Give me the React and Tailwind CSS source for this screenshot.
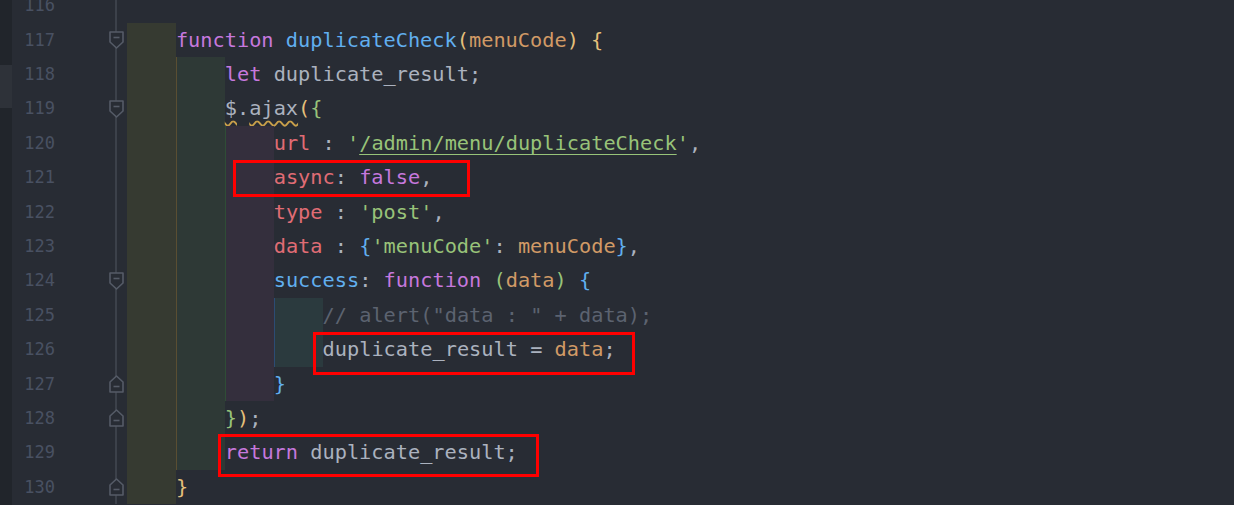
import React from 'react';

const C = {
  kw: 'text-[#c678dd]',
  fn: 'text-[#61afef]',
  prop: 'text-[#e06c75]',
  str: 'text-[#98c379]',
  param: 'text-[#d19a66]',
  plain: 'text-[#abb2bf]',
  cmt: 'text-[#5c6370]',
  gold: 'text-[#e5c07b]',
  green: 'text-[#98c379]',
  blue: 'text-[#61afef]',
};

const wavy = ' underline decoration-wavy decoration-[#c9a04a] underline-offset-[5px] decoration-[1.5px]';

// indent rainbow bands, one per level
const bands = [
  'bg-[#363a31]',
  'bg-[#2e3936] border-l border-[#5a4e32]',
  'bg-[#342f3d] border-l border-[#2f4d36]',
  'bg-[#2b3a3e] border-l border-[#2c4c74]',
];

const lines = [
  { n: 116, lv: 0, code: [] },
  {
    n: 117, lv: 1, fold: 'open',
    code: [
      ['function', C.kw], [' '], ['duplicateCheck', C.fn], ['(', C.gold],
      ['menuCode', C.param], [')', C.gold], [' '], ['{', C.gold],
    ],
  },
  { n: 118, lv: 2, code: [['let', C.kw], [' duplicate_result;', C.plain]] },
  {
    n: 119, lv: 2, fold: 'open',
    code: [
      ['$', C.plain + wavy],
      ['.', C.plain],
      ['ajax', C.plain + wavy],
      ['(', C.gold], ['{', C.green],
    ],
  },
  {
    n: 120, lv: 3,
    code: [
      ['url', C.prop], [' : ', C.plain], ["'", C.str],
      ['/admin/menu/duplicateCheck', C.str + ' underline underline-offset-[4px] decoration-1'],
      ["'", C.str], [',', C.plain],
    ],
  },
  { n: 121, lv: 3, code: [['async', C.prop], [': ', C.plain], ['false', C.kw], [',', C.plain]] },
  { n: 122, lv: 3, code: [['type', C.prop], [' : ', C.plain], ["'post'", C.str], [',', C.plain]] },
  {
    n: 123, lv: 3,
    code: [
      ['data', C.prop], [' : ', C.plain], ['{', C.blue], ["'menuCode'", C.str],
      [': ', C.plain], ['menuCode', C.param], ['}', C.blue], [',', C.plain],
    ],
  },
  {
    n: 124, lv: 3, fold: 'open',
    code: [
      ['success', C.fn], [': ', C.plain], ['function', C.kw], [' '], ['(', C.green],
      ['data', C.param], [')', C.green], [' '], ['{', C.blue],
    ],
  },
  { n: 125, lv: 4, code: [['// alert("data : " + data);', C.cmt]] },
  { n: 126, lv: 4, code: [['duplicate_result = ', C.plain], ['data', C.param], [';', C.plain]] },
  { n: 127, lv: 3, fold: 'close', code: [['}', C.blue]] },
  { n: 128, lv: 2, fold: 'close', code: [['}', C.green], [')', C.gold], [';', C.plain]] },
  { n: 129, lv: 2, code: [['return', C.kw], [' duplicate_result;', C.plain]] },
  { n: 130, lv: 1, fold: 'close', code: [['}', C.gold]] },
];

function FoldMark({ type }) {
  const open = type === 'open';
  return (
    <svg width="15" height="18" viewBox="0 0 15 18" className="absolute left-0 top-1/2 -translate-y-1/2">
      <path
        d={open ? 'M1 1 H14 V11 L7.5 17 L1 11 Z' : 'M1 17 H14 V7 L7.5 1 L1 7 Z'}
        fill="#282c34"
        stroke="#555b67"
        strokeWidth="1.6"
        strokeLinejoin="round"
      />
      <path d={open ? 'M4.5 6.5 H10.5' : 'M4.5 11.5 H10.5'} stroke="#555b67" strokeWidth="1.6" />
    </svg>
  );
}

export default function App() {
  return (
    <main className="relative w-[1234px] h-[505px] overflow-hidden flex bg-[#282c34]">
      {/* left tool strip */}
      <div className="w-[12px] h-full bg-[#21252b] flex flex-col">
        <div className="mt-[65px] h-[43px] bg-[#2e3239]" />
      </div>

      {/* editor rows */}
      <div className="flex-1 flex flex-col -mt-[11.7px]">
        {lines.map((l) => (
          <div key={l.n} className="flex h-[34.4px] shrink-0 items-stretch">
            <div className="w-[43px] text-right text-[17px] leading-[34.4px] text-[#495162] font-['DejaVu_Sans_Mono',monospace]">
              {l.n}
            </div>
            <div className="w-[72px] flex justify-end pr-[3.5px]">
              <div className="relative w-[15px] h-full">
                <div className="absolute left-[6.5px] top-0 bottom-0 w-[2px] bg-[#3c414a]" />
                {l.fold && <FoldMark type={l.fold} />}
              </div>
            </div>
            <div className="flex items-stretch">
              {Array.from({ length: l.lv }).map((_, i) => (
                <span key={i} className={`w-[48.9px] shrink-0 ${bands[i]}`} />
              ))}
            </div>
            <div className="whitespace-pre text-[20.3px] leading-[34.4px] text-[#abb2bf] font-['DejaVu_Sans_Mono',monospace]">
              {l.code.map(([t, cls], i) => (
                <span key={i} className={cls}>
                  {t}
                </span>
              ))}
            </div>
          </div>
        ))}
      </div>

      {/* red annotation boxes */}
      <div className="absolute left-[233px] top-[160px] w-[237px] h-[37px] border-[3px] border-[#ff0000]" />
      <div className="absolute left-[313px] top-[332px] w-[322px] h-[43px] border-[3px] border-[#ff0000]" />
      <div className="absolute left-[218px] top-[434px] w-[321px] h-[43px] border-[3px] border-[#ff0000]" />
    </main>
  );
}
